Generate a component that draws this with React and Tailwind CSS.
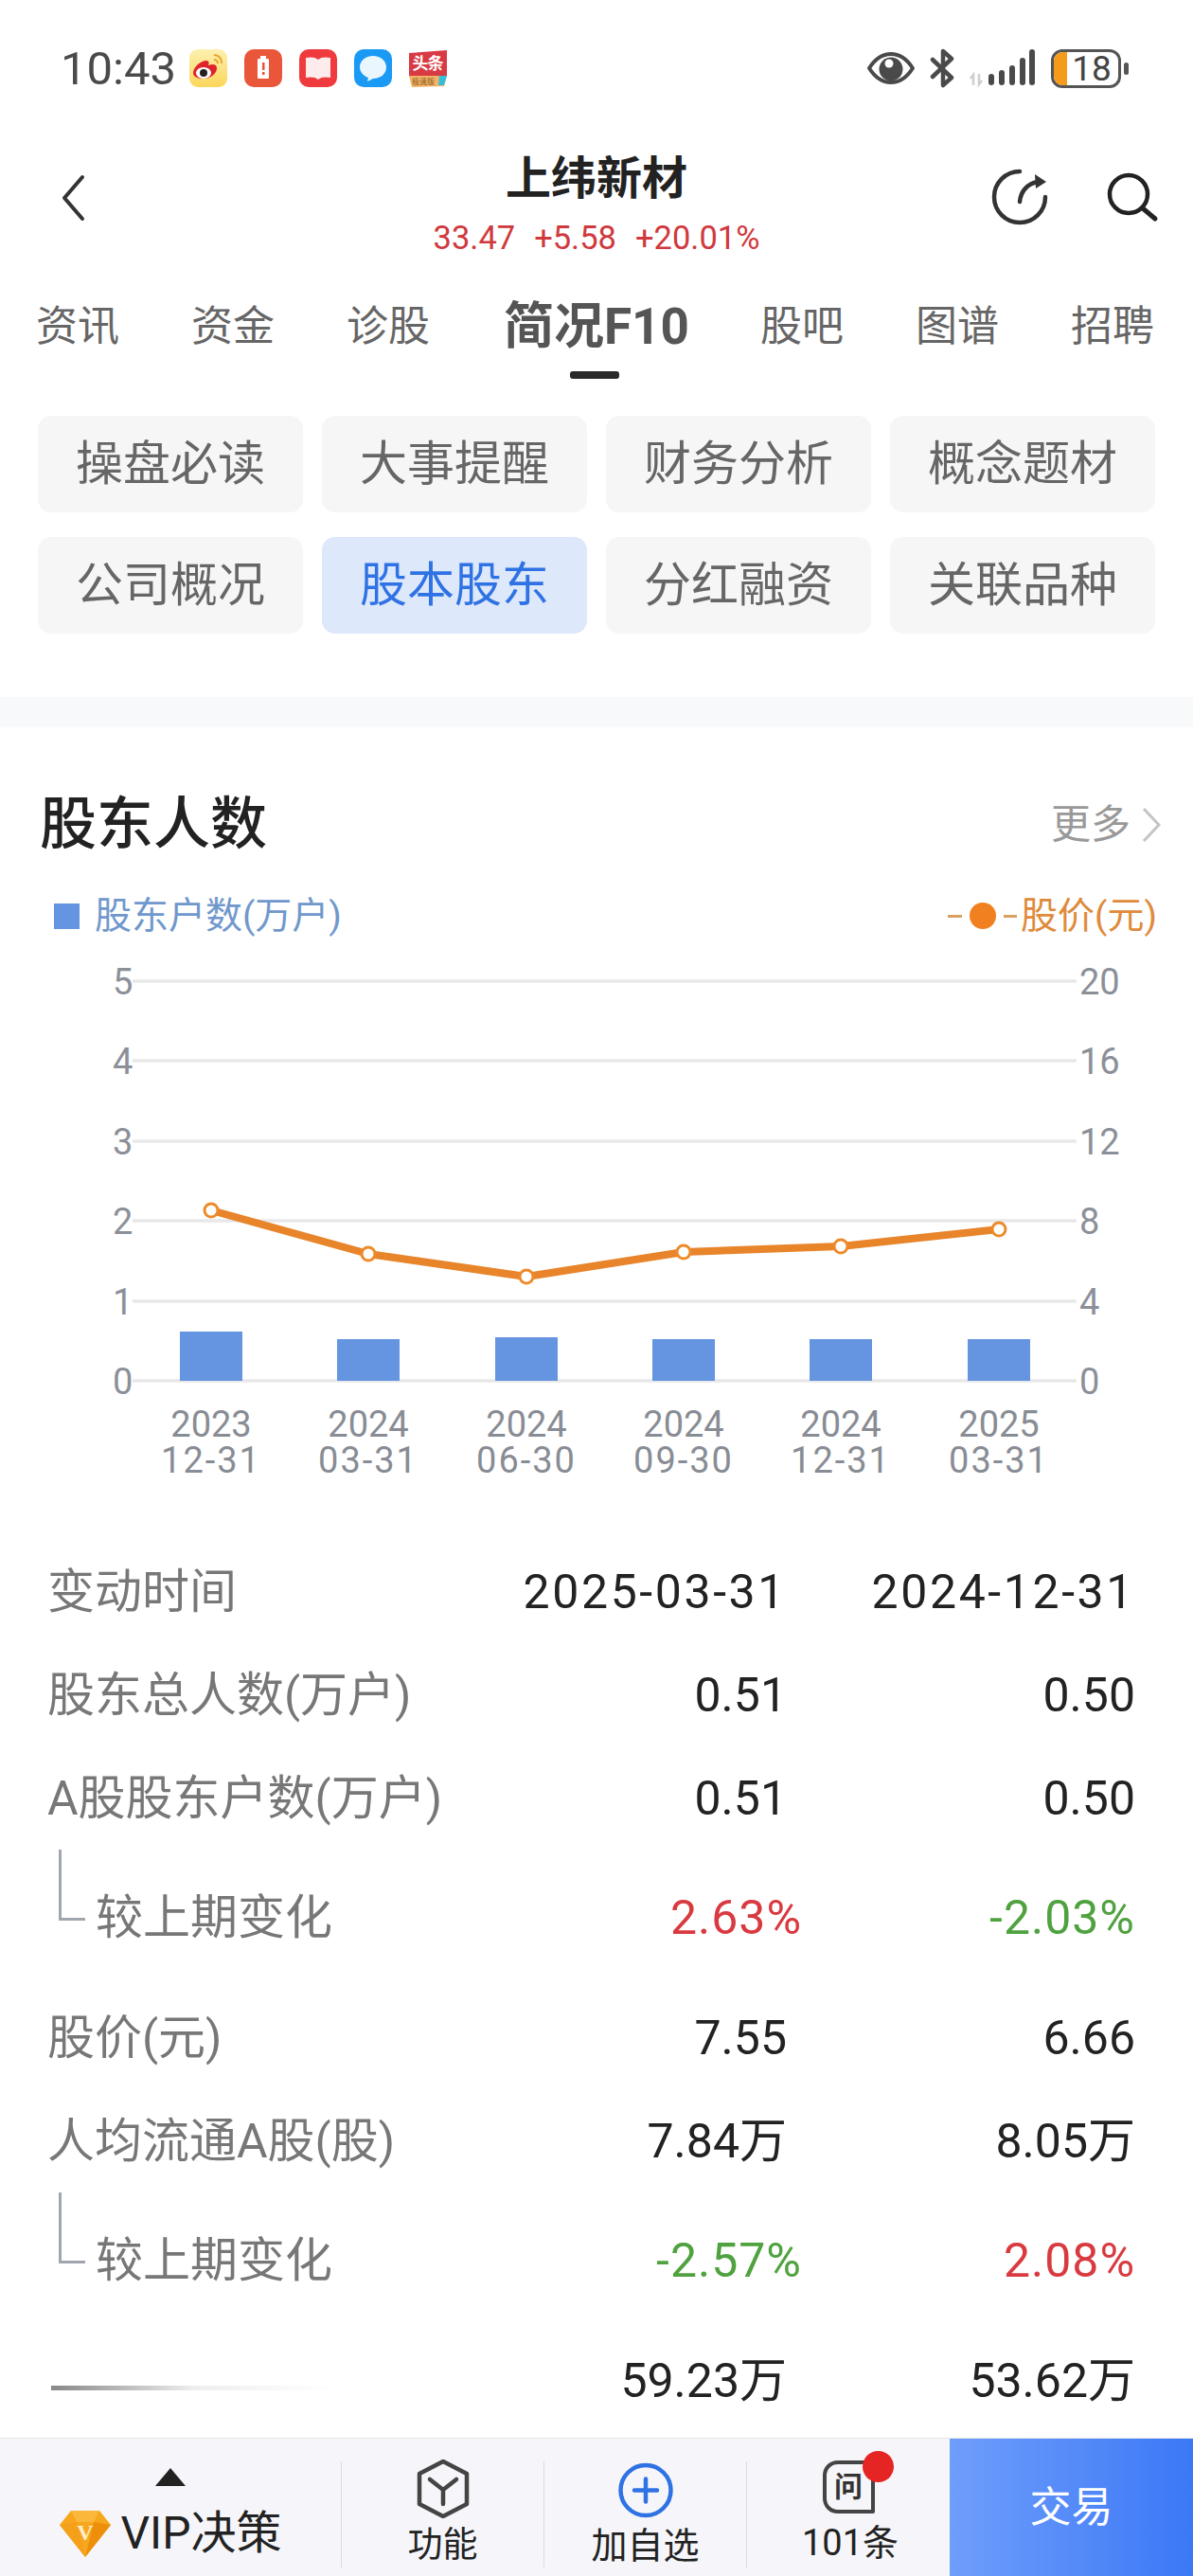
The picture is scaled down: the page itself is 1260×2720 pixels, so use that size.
const tabs = ['资讯', '资金', '诊股', '简况F10', '股吧', '图谱', '招聘'];
const shortcuts = ['操盘必读', '大事提醒', '财务分析', '概念题材', '公司概况', '股本股东', '分红融资', '关联品种'];

const xLabels = [
  ['2023', '12-31'],
  ['2024', '03-31'],
  ['2024', '06-30'],
  ['2024', '09-30'],
  ['2024', '12-31'],
  ['2025', '03-31'],
];
const centers = [223, 389, 556, 722, 888, 1055];
const barTops = [1407, 1415, 1413, 1415, 1415, 1415];
const lineYs = [1279, 1325, 1349, 1323, 1317, 1299];
const gridYs = [1037, 1121, 1206, 1290, 1375, 1459];
const leftAxis = ['5', '4', '3', '2', '1', '0'];
const rightAxis = ['20', '16', '12', '8', '4', '0'];

const RED = 'text-[#d93a40]';
const GREEN = 'text-[#4fa23f]';

// label, col1, col2, sub row?
const rows = [
  { label: '变动时间', a: '2025-03-31', b: '2024-12-31', date: true },
  { label: '股东总人数(万户)', a: '0.51', b: '0.50' },
  { label: 'A股股东户数(万户)', a: '0.51', b: '0.50' },
  { label: '较上期变化', a: '2.63%', b: '-2.03%', sub: true, aColor: RED, bColor: GREEN },
  { label: '股价(元)', a: '7.55', b: '6.66' },
  { label: '人均流通A股(股)', a: '7.84万', b: '8.05万' },
  { label: '较上期变化', a: '-2.57%', b: '2.08%', sub: true, aColor: GREEN, bColor: RED },
  { label: '', a: '59.23万', b: '53.62万', hidden: true },
];

const AppIcon = ({ children }) => (
  <svg width="40" height="40" viewBox="0 0 40 40">{children}</svg>
);

const StatusBar = () => (
  <div className="flex items-center h-[144px] pl-[64px] pr-[68px]">
    <span className="text-[49px] leading-none text-[#4a4a4a] w-[136px]">10:43</span>
    <div className="flex gap-[18px]">
      <AppIcon>
        <defs>
          <linearGradient id="wb" x1="0" y1="0" x2="0" y2="1">
            <stop offset="0" stopColor="#fdf0b0" />
            <stop offset="1" stopColor="#fbd65a" />
          </linearGradient>
        </defs>
        <rect width="40" height="40" rx="9" fill="url(#wb)" />
        <path d="M4 25c0-6 8-13 14-13 3 0 3 3 2 5 5-2 9-1 9 3 0 6-7 11-14 11-6 0-11-2-11-6z" fill="#e0242c" />
        <ellipse cx="15" cy="25" rx="8" ry="6" fill="#fff" />
        <circle cx="15" cy="25" r="4" fill="#222" />
        <path d="M26 6a8 8 0 0 1 8 9M26 11a4 4 0 0 1 4 4" stroke="#e8a32c" strokeWidth="2" fill="none" />
      </AppIcon>
      <AppIcon>
        <rect width="40" height="40" rx="10" fill="#e9563a" />
        <rect x="14" y="10" width="12" height="21" rx="1" fill="#fff" />
        <rect x="17" y="7" width="6" height="3" fill="#fff" />
        <rect x="19" y="14" width="2.5" height="8" fill="#e9563a" />
        <rect x="19" y="24" width="2.5" height="3" fill="#e9563a" />
      </AppIcon>
      <AppIcon>
        <rect width="40" height="40" rx="10" fill="#ef3b3e" />
        <path d="M7 9c5-1 10-1 13 2 3-3 8-3 13-2v21c-5-1-10-1-13 2-3-3-8-3-13-2z" fill="#fdeceb" />
      </AppIcon>
      <AppIcon>
        <rect width="40" height="40" rx="10" fill="#1b9af5" />
        <path d="M20 7c8 0 14 5 14 12s-6 12-14 12l-6 3 1-4c-5-2-9-6-9-11 0-7 6-12 14-12z" fill="#eaf6fe" />
      </AppIcon>
      <AppIcon>
        <path d="M0 4l40-3v27H0z" fill="#d83a44" />
        <path d="M0 28h40l-3 11-34 1z" fill="#f3b267" />
        <path d="M32 28h8l-3 10h-6z" fill="#35c0d6" />
        <text x="20" y="21" textAnchor="middle" fontSize="17" fontWeight="700" fill="#fff" textLength="33">头条</text>
        <text x="15" y="37" textAnchor="middle" fontSize="8" fill="#8a5a20">极速版</text>
      </AppIcon>
    </div>
    <div className="ml-auto flex items-center">
      <svg width="52" height="36" viewBox="0 0 52 36" className="mr-[15px]">
        <path d="M3 18C10 7 18 3 26 3s16 4 23 15c-7 11-15 15-23 15S10 29 3 18z" fill="none" stroke="#4a4a4a" strokeWidth="4" strokeLinejoin="round" />
        <circle cx="26" cy="19" r="12.5" fill="#4a4a4a" />
        <circle cx="24" cy="13" r="4.5" fill="#fff" />
      </svg>
      <svg width="26" height="42" viewBox="0 0 26 42" className="mr-[15px]">
        <path d="M3 12l20 19-9 8V3l9 8L3 30" fill="none" stroke="#4a4a4a" strokeWidth="4.5" strokeLinejoin="round" strokeLinecap="round" />
      </svg>
      <svg width="70" height="42" viewBox="0 0 70 42" className="mr-[17px]">
        <path d="M5 39V28l-3 4M11 27v11l3-4" fill="none" stroke="#cfcfcf" strokeWidth="2.5" />
        <rect x="21" y="27" width="6" height="12" rx="3" fill="#4a4a4a" />
        <rect x="32" y="23" width="6" height="16" rx="3" fill="#4a4a4a" />
        <rect x="43" y="18" width="6" height="21" rx="3" fill="#4a4a4a" />
        <rect x="54" y="10" width="6" height="29" rx="3" fill="#4a4a4a" />
        <rect x="64" y="1" width="6" height="38" rx="3" fill="#4a4a4a" />
      </svg>
      <div className="relative flex items-center justify-center w-[74px] h-[41px] border-[3px] border-[#555] rounded-[12px] overflow-hidden">
        <div className="absolute left-0 top-0 bottom-0 w-[14px] bg-[#f59b1c]" />
        <span className="relative text-[37px] leading-none text-[#444] pl-[12px]">18</span>
      </div>
      <div className="w-[5px] h-[13px] ml-[3px] rounded-full bg-[#555]" />
    </div>
  </div>
);

const NavBar = () => (
  <div className="flex h-[144px] relative">
    <svg width="26" height="50" viewBox="0 0 26 50" className="absolute left-[64px] top-[40px]">
      <path d="M23 3L4 25l19 22" fill="none" stroke="#333" strokeWidth="4" strokeLinecap="round" strokeLinejoin="round" />
    </svg>
    <div className="flex-1 flex flex-col items-center">
      <div className="text-[48px] leading-none font-bold text-[#222] mt-[21px]">上纬新材</div>
      <div className="flex gap-[20px] text-[34.5px] leading-none text-[#d0393e] mt-[21px]">
        <span>33.47</span>
        <span>+5.58</span>
        <span>+20.01%</span>
      </div>
    </div>
    <svg width="60" height="64" viewBox="0 0 60 64" className="absolute left-[1047px] top-[33px]">
      <path d="M30 4A27 27 0 1 0 57 31" fill="none" stroke="#333" strokeWidth="4.5" strokeLinecap="round" />
      <path d="M30 36C31 25 38 17 49 15" fill="none" stroke="#333" strokeWidth="4.5" strokeLinecap="round" />
      <path d="M46 7l12 8-11 7z" fill="#333" />
    </svg>
    <svg width="56" height="54" viewBox="0 0 56 54" className="absolute left-[1168px] top-[38px]">
      <circle cx="24" cy="23" r="20" fill="none" stroke="#222" strokeWidth="4.5" />
      <path d="M39 38l13 11" stroke="#222" strokeWidth="5" strokeLinecap="round" />
    </svg>
  </div>
);

const TabBar = () => (
  <div className="flex items-start gap-[76px] pl-[38px] h-[151px] pt-[32px]">
    {tabs.map((t) => {
      const active = t === '简况F10';
      return (
        <div key={t} className={`relative whitespace-nowrap ${active ? 'ml-[2px] -mr-[1px]' : ''}`}>
          <span className={active ? 'text-[53px] leading-[50px] font-bold text-[#555]' : 'text-[44px] leading-[50px] text-[#666]'}>{t}</span>
          {active && <div className="absolute left-[70px] top-[72px] w-[52px] h-[8px] rounded-[3px] bg-[#2a2a2a]" />}
        </div>
      );
    })}
  </div>
);

const Shortcuts = () => (
  <div className="grid grid-cols-[repeat(4,280px)] auto-rows-[102px] gap-x-[20px] gap-y-[26px] pl-[40px]">
    {shortcuts.map((s) => {
      const active = s === '股本股东';
      return (
        <div
          key={s}
          className={`flex items-center justify-center rounded-[14px] text-[50px] leading-none ${active ? 'bg-[#dde8fb] text-[#2f72e4]' : 'bg-[#f6f6f6] text-[#666]'}`}
        >
          {s}
        </div>
      );
    })}
  </div>
);

const Chart = () => (
  <svg width="1260" height="632" viewBox="0 993 1260 632" className="block">
    {gridYs.map((y, i) => (
      <g key={y}>
        <line x1="140" x2="1137" y1={y} y2={y} stroke="#e8e8ea" strokeWidth="3.5" />
        <text x="119" y={y + 14} fontSize="38" fill="#8b9098">{leftAxis[i]}</text>
        <text x="1140" y={y + 14} fontSize="38" fill="#8b9098">{rightAxis[i]}</text>
      </g>
    ))}
    {centers.map((x, i) => (
      <rect key={x} x={x - 33} y={barTops[i]} width="66" height={1459 - barTops[i]} fill="#6595e0" />
    ))}
    <polyline
      points={centers.map((x, i) => `${x},${lineYs[i]}`).join(' ')}
      fill="none"
      stroke="#e8842a"
      strokeWidth="8"
      strokeLinejoin="round"
    />
    {centers.map((x, i) => (
      <circle key={x} cx={x} cy={lineYs[i]} r="7" fill="#fff" stroke="#ee8a2a" strokeWidth="3" />
    ))}
    {centers.map((x, i) => (
      <g key={x} fontSize="38" fill="#888c94" textAnchor="middle">
        <text x={x} y="1518">{xLabels[i][0]}</text>
        <text x={x} y="1556" letterSpacing="2">{xLabels[i][1]}</text>
      </g>
    ))}
  </svg>
);

const TableRow = ({ row }) => (
  <div className={`flex items-center pr-[61px] text-[50px] leading-none ${row.sub ? 'h-[144px]' : 'h-[109px]'}`}>
    {row.sub ? (
      <div className="flex flex-1 items-center h-full pl-[62px] relative">
        <div className="absolute left-[62px] top-0 w-[28px] h-[75px] border-l-[3px] border-b-[3px] border-[#a0a6ae]" />
        <span className="pl-[39px] text-[#777]">{row.label}</span>
      </div>
    ) : row.hidden ? (
      <div className="flex-1 pl-[54px] pt-[16px]">
        <div className="w-[300px] h-[5px] bg-gradient-to-r from-[#888] via-[#eeeeee] to-transparent" />
      </div>
    ) : (
      <div className="flex-1 pl-[50px] text-[#777]">{row.label}</div>
    )}
    <div className={`w-[300px] text-right whitespace-nowrap ${row.sub ? 'translate-x-[16px] tracking-[1px]' : ''} ${row.aColor || 'text-[#222]'} ${row.date ? 'tracking-[2.6px]' : ''}`}>{row.a}</div>
    <div className={`w-[368px] text-right whitespace-nowrap ${row.sub ? 'tracking-[1px]' : ''} ${row.bColor || 'text-[#222]'} ${row.date ? 'tracking-[2.6px]' : ''}`}>{row.b}</div>
  </div>
);

const Separator = () => <div className="w-px h-[112px] mt-[24px] bg-[#dcdce0]" />;

const Footer = () => (
  <div className="flex h-[146px] bg-[#f6f6fa] border-t border-[#e6e6e8] text-[#222]">
    <div className="w-[360px] flex flex-col items-center pt-[31px]">
      <div className="w-0 h-0 border-l-[16px] border-r-[16px] border-b-[19px] border-l-transparent border-r-transparent border-b-[#222]" />
      <div className="flex items-center gap-[11px] mt-[25px]">
        <svg width="54" height="50" viewBox="0 0 54 50">
          <path d="M12 1h30l12 15-27 34L0 16z" fill="#f7a71e" />
          <path d="M12 1h30l-6 12H18z" fill="#fbb73a" />
          <path d="M0 16l18-3 9 37z" fill="#f5a01a" />
          <path d="M54 16l-18-3-9 37z" fill="#ee8f0c" />
          <text x="27" y="32" textAnchor="middle" fontSize="24" fontWeight="700" fill="#fdeecb" fontFamily="Liberation Serif, serif">V</text>
        </svg>
        <span className="text-[48px] leading-none">VIP决策</span>
      </div>
    </div>
    <Separator />
    <div className="w-[213px] flex flex-col items-center pt-[22px]">
      <svg width="56" height="62" viewBox="0 0 56 62">
        <path d="M28 2l25 13v32L28 60 3 47V15z" fill="none" stroke="#444" strokeWidth="4.5" strokeLinejoin="round" />
        <path d="M14 21l14 11 14-11M28 32v15" fill="none" stroke="#444" strokeWidth="4.5" strokeLinecap="round" strokeLinejoin="round" />
      </svg>
      <span className="text-[37px] leading-none mt-[10px]">功能</span>
    </div>
    <Separator />
    <div className="w-[213px] flex flex-col items-center pt-[25px]">
      <svg width="58" height="59" viewBox="0 0 58 59">
        <circle cx="29" cy="29.5" r="26.5" fill="none" stroke="#2f72e4" strokeWidth="4.5" />
        <path d="M17 29.5h24M29 17.5v24" stroke="#2f72e4" strokeWidth="4.5" strokeLinecap="round" />
      </svg>
      <span className="text-[38px] leading-none mt-[10px]">加自选</span>
    </div>
    <Separator />
    <div className="w-[214px] flex flex-col items-center pt-[23px]">
      <div className="relative w-[55px] h-[56px] flex items-center justify-center">
        <svg width="55" height="56" viewBox="0 0 55 56" className="absolute inset-0">
          <path d="M16 2h37v52H16C8 54 2 48 2 40V16C2 8 8 2 16 2z" fill="none" stroke="#444" strokeWidth="4" strokeLinejoin="round" />
        </svg>
        <span className="relative text-[30px] leading-none font-bold text-[#333]">问</span>
        <div className="absolute left-[42px] -top-[10px] w-[33px] h-[33px] rounded-full bg-[#e52424]" />
      </div>
      <span className="text-[38px] leading-none mt-[12px] pl-[4px]">101条</span>
    </div>
    <div className="ml-auto w-[257px] flex items-center justify-center bg-gradient-to-r from-[#6f9dfb] to-[#3b78f6] text-white text-[44px] leading-none">
      交易
    </div>
  </div>
);

export default function App() {
  return (
    <div className="flex flex-col h-[2720px] w-[1260px] overflow-hidden bg-white font-['Roboto','Noto_Sans_CJK_SC',sans-serif]">
      <StatusBar />
      <NavBar />
      <TabBar />
      <Shortcuts />
      <div className="h-[32px] mt-[67px] bg-[#f8f9fb]" />
      <div className="flex items-center justify-between h-[60px] mt-[73px] pl-[42px] pr-[34px]">
        <span className="text-[60px] leading-none font-medium text-[#222]">股东人数</span>
        <div className="flex items-center gap-[12px]">
          <span className="text-[42px] leading-none text-[#999]">更多</span>
          <svg width="20" height="38" viewBox="0 0 20 38">
            <path d="M2 2l16 17L2 36" fill="none" stroke="#c4c4c4" strokeWidth="3" />
          </svg>
        </div>
      </div>
      <div className="flex items-center justify-between h-[50px] mt-[41px] pl-[57px] pr-[38px]">
        <div className="flex items-center gap-[16px]">
          <div className="w-[27px] h-[27px] bg-[#6595e0]" />
          <span className="text-[39px] leading-none text-[#7098cc]">股东户数(万户)</span>
        </div>
        <div className="flex items-center text-[39px] leading-none text-[#e08a3c]">
          <div className="w-[15px] h-[3px] bg-[#d9a05f]" />
          <div className="w-[28px] h-[28px] mx-[8px] rounded-full bg-[#f08020]" />
          <div className="w-[14px] h-[3px] mr-[4px] bg-[#d9a05f]" />
          <span>股价(元)</span>
        </div>
      </div>
      <Chart />
      <div className="flex-1 pt-[2px]">
        {rows.map((row, i) => (
          <TableRow key={i} row={row} />
        ))}
      </div>
      <Footer />
    </div>
  );
}
